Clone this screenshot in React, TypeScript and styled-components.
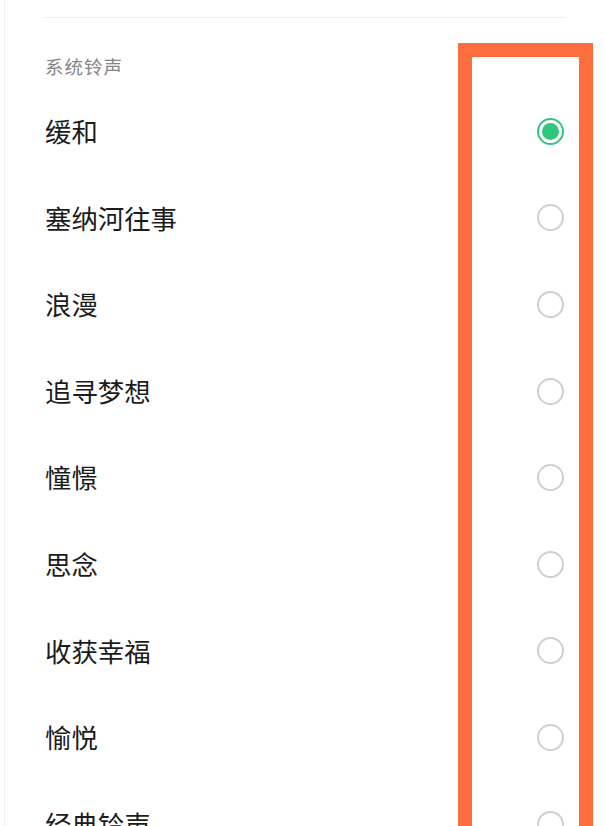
import styled, { createGlobalStyle } from "styled-components";

const GlobalStyle = createGlobalStyle`
  html, body {
    margin: 0;
    padding: 0;
    background: #ffffff;
  }
  body {
    font-family: "Noto Sans CJK SC", "Noto Sans", sans-serif;
    overflow: hidden;
  }
`;

const ringtones = [
  "缓和",
  "塞纳河往事",
  "浪漫",
  "追寻梦想",
  "憧憬",
  "思念",
  "收获幸福",
  "愉悦",
  "经典铃声",
];

const Screen = styled.div`
  position: relative;
  height: 826px;
  overflow: hidden;
  margin-left: 4px;
  border-left: 1px solid #f1f1f1;
  padding: 17px 41px 0 40px;
`;

const Divider = styled.div`
  height: 1px;
  margin-right: -1px;
  background: #ececec;
`;

const SectionTitle = styled.div`
  height: 70px;
  box-sizing: border-box;
  padding-top: 37px;
  font-size: 18.5px;
  line-height: 22px;
  color: #858585;
  letter-spacing: 1px;
`;

const Row = styled.div`
  height: 86.6px;
  display: flex;
  align-items: center;
  justify-content: space-between;
`;

const Label = styled.span`
  font-size: 26.4px;
  line-height: 1;
  color: #1c1c1c;
`;

const Radio = styled.span<{ $checked: boolean }>`
  width: 27px;
  height: 27px;
  box-sizing: border-box;
  border-radius: 50%;
  border: 2px solid ${(p) => (p.$checked ? "#2fc57c" : "#cfcfcf")};
  display: flex;
  align-items: center;
  justify-content: center;

  &::after {
    content: "";
    width: 17px;
    height: 17px;
    border-radius: 50%;
    background: #2fc57c;
    display: ${(p) => (p.$checked ? "block" : "none")};
  }
`;

// highlight frame drawn over the radio column
const Highlight = styled.div`
  position: absolute;
  left: 453px;
  top: 43px;
  width: 135px;
  height: 820px;
  box-sizing: border-box;
  border: 14px solid #fe6d3d;
  pointer-events: none;
`;

const App = () => {
  return (
    <>
      <GlobalStyle />
      <Screen>
        <Divider />
        <SectionTitle>系统铃声</SectionTitle>
        {ringtones.map((name, i) => (
          <Row key={name}>
            <Label>{name}</Label>
            <Radio $checked={i === 0} />
          </Row>
        ))}
        <Highlight />
      </Screen>
    </>
  );
};

export default App;
